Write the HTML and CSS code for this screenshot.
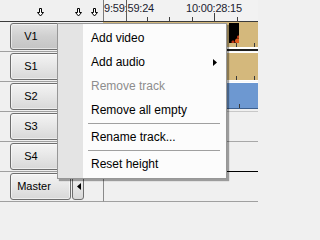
FILE: index.html
```html
<!DOCTYPE html>
<html>
<head>
<meta charset="utf-8">
<link rel="stylesheet" href="styles.css">
</head>
<body>
<div class="app">
  <div class="header">
    <div class="hdr-left">
      <svg class="arr" viewBox="0 0 7 9"><polygon points="2.5,0.5 4.5,0.5 4.5,4.5 6.5,4.5 3.5,8 0.5,4.5 2.5,4.5" fill="#fff" stroke="#000" stroke-width="1"/></svg>
      <svg class="arr a2" viewBox="0 0 7 9"><polygon points="2.5,0.5 4.5,0.5 4.5,4.5 6.5,4.5 3.5,8 0.5,4.5 2.5,4.5" fill="#fff" stroke="#000" stroke-width="1"/></svg>
      <svg class="arr a3" viewBox="0 0 7 9"><polygon points="2.5,0.5 4.5,0.5 4.5,4.5 6.5,4.5 3.5,8 0.5,4.5 2.5,4.5" fill="#fff" stroke="#000" stroke-width="1"/></svg>
    </div>
    <div class="ruler">
      <span class="tick" style="left:43px"></span>
      <span class="tick" style="left:65px"></span>
      <span class="tick" style="left:88px"></span>
      <span class="tick major" style="left:110px"></span>
      <span class="tick" style="left:133px"></span>
      <span class="tc tc-first">9:59:59:24</span>
      <span class="tc tc-mid" style="left:110px">10:00:28:15</span>
      <span class="playline" style="left:22px"></span>
    </div>
  </div>

  <div class="tracks">
    <div class="row">
      <div class="head">
        <div class="btn sel"><span class="lbl">V1</span></div>
        <div class="mini"><svg class="spk" viewBox="0 0 4 7"><polygon points="4,0 4,7 0,3.5" fill="#000"/></svg></div>
      </div>
      <div class="tl tl-v1">
        <div class="clip tan h25">
          <div class="thumb" style="margin-left:126px"></div>
          <span class="ctick" style="left:133px"></span>
          <span class="ctick" style="left:151px"></span>
        </div>
        <div class="vgap"></div>
      </div>
    </div>
    <div class="row">
      <div class="head">
        <div class="btn"><span class="lbl">S1</span></div>
        <div class="mini"><svg class="spk" viewBox="0 0 4 7"><polygon points="4,0 4,7 0,3.5" fill="#000"/></svg></div>
      </div>
      <div class="tl tl-s1">
        <div class="clip tan h27">
          <span class="ctick" style="left:133px"></span>
          <span class="ctick" style="left:151px"></span>
        </div>
      </div>
    </div>
    <div class="row">
      <div class="head">
        <div class="btn"><span class="lbl">S2</span></div>
        <div class="mini"><svg class="spk" viewBox="0 0 4 7"><polygon points="4,0 4,7 0,3.5" fill="#000"/></svg></div>
      </div>
      <div class="tl tl-s2">
        <div class="clip blue h26">
          <span class="ctick" style="left:136px"></span>
        </div>
      </div>
    </div>
    <div class="row">
      <div class="head">
        <div class="btn"><span class="lbl">S3</span></div>
        <div class="mini"><svg class="spk" viewBox="0 0 4 7"><polygon points="4,0 4,7 0,3.5" fill="#000"/></svg></div>
      </div>
      <div class="tl tl-s3"></div>
    </div>
    <div class="row">
      <div class="head">
        <div class="btn"><span class="lbl">S4</span></div>
        <div class="mini"><svg class="spk" viewBox="0 0 4 7"><polygon points="4,0 4,7 0,3.5" fill="#000"/></svg></div>
      </div>
      <div class="tl tl-s4"></div>
    </div>
    <div class="row">
      <div class="head">
        <div class="btn"><span class="lbl lbl-master">Master</span>
          <svg class="expand" viewBox="0 0 8 4"><path d="M0 0h3v1h-2v2h-1z M5 0h3v3h-1v-2h-2z" fill="#000"/></svg>
        </div>
        <div class="mini"><svg class="spk" viewBox="0 0 4 7"><polygon points="4,0 4,7 0,3.5" fill="#000"/></svg></div>
      </div>
      <div class="tl tl-master"></div>
    </div>
  </div>

  <div class="menu">
    <div class="item">Add video</div>
    <div class="item">Add audio<svg class="sub" viewBox="0 0 4 7"><polygon points="0,0 4,3.5 0,7" fill="#000"/></svg></div>
    <div class="item dis">Remove track</div>
    <div class="item">Remove all empty</div>
    <div class="sep"></div>
    <div class="item">Rename track...</div>
    <div class="sep"></div>
    <div class="item">Reset height</div>
  </div>
</div>
</body>
</html>
```

FILE: styles.css
```css
html, body {
  margin: 0;
  padding: 0;
}
body {
  width: 258px;
  height: 202px;
  overflow: hidden;
  background: #f0f0f0;
  font-family: "Liberation Sans", Arial, sans-serif;
}
.app {
  position: relative;
  width: 258px;
  height: 202px;
  overflow: hidden;
}

/* header */
.header {
  display: flex;
  height: 22px;
  box-sizing: border-box;
  border-bottom: 1px solid #3c3c3c;
  background: #f0f0f0;
}
.hdr-left {
  width: 103px;
  box-sizing: border-box;
  display: flex;
  align-items: flex-start;
  padding: 8px 0 0 37px;
}
.arr {
  width: 7px;
  height: 9px;
  display: block;
  flex: none;
}
.a2 { margin-left: 31px; }
.a3 { margin-left: 9px; }
.ruler {
  flex: 1;
  position: relative;
  border-left: 1px solid #7a7a7a;
  overflow: hidden;
  background: #f2f2f2;
}
.tc {
  position: absolute;
  top: 2px;
  font-size: 11px;
  line-height: 13px;
  letter-spacing: -0.2px;
  color: #1c1c30;
  white-space: nowrap;
}
.tc-first {
  left: 0;
}
.tc-mid {
  transform: translateX(-50%);
}
.tick {
  position: absolute;
  bottom: 0;
  width: 1px;
  height: 4px;
  background: #404040;
}
.tick.major { height: 8px; }
.playline {
  position: absolute;
  top: 0;
  bottom: 0;
  width: 1px;
  background: #5a5a5a;
}

/* tracks */
.row {
  display: grid;
  grid-template-columns: 103px 155px;
  height: 30px;
}
.head {
  display: flex;
  align-items: flex-start;
  gap: 1px;
  padding: 1px 0 0 10px;
  box-sizing: border-box;
  border-bottom: 1px solid #a0a0a0;
}
.btn {
  width: 61px;
  height: 27px;
  box-sizing: border-box;
  border: 1px solid #6e6e6e;
  border-radius: 3px;
  background: linear-gradient(#f4f4f4, #e6e6e6 50%, #d8d8d8);
  box-shadow: inset 0 0 0 1px rgba(255, 255, 255, 0.55);
  display: flex;
  align-items: flex-start;
}
.btn.sel {
  background: linear-gradient(#e2e2e2, #cfcfcf 50%, #c4c4c4);
}
.lbl {
  width: 40px;
  text-align: center;
  font-size: 11px;
  line-height: 25px;
  color: #000;
}
.lbl-master {
  width: 46px;
}
.expand {
  width: 8px;
  height: 4px;
  display: block;
  margin: 1px 0 0 0;
}
.mini {
  width: 12px;
  height: 27px;
  box-sizing: border-box;
  border: 1px solid #6e6e6e;
  border-radius: 3px;
  background: linear-gradient(#f4f4f4, #e6e6e6 50%, #d8d8d8);
  display: flex;
  align-items: center;
  justify-content: flex-end;
  padding-right: 2px;
}
.spk {
  width: 4px;
  height: 7px;
  display: block;
}

.tl {
  box-sizing: border-box;
  border-bottom: 1px solid #c8c8c8;
  background: #f0f0f0;
  display: flex;
  flex-direction: column;
}
.clip {
  position: relative;
  display: flex;
  align-items: flex-start;
  flex: none;
}
.tan { background: #d4b87c; }
.blue {
  background: #6d98d1;
  border-bottom: 1px solid #3c5f8e;
  box-sizing: border-box;
}
.h25 { height: 25px; }
.h26 { height: 26px; }
.h27 { height: 27px; }
.ctick {
  position: absolute;
  bottom: 0;
  width: 1px;
  height: 4px;
  background: #3a3a3a;
}
.thumb {
  width: 10px;
  height: 20px;
  margin-top: 1px;
  background:
    radial-gradient(circle at 85% 90%, #e05a1c 0 2px, transparent 3px),
    radial-gradient(circle at 40% 95%, #b83414 0 1px, transparent 2px),
    radial-gradient(circle at 95% 70%, #c0401a 0 1px, transparent 2px),
    #000;
}
.tl-v1 {
  background: #fff;
  border-bottom-color: #f6f6f6;
}
.vgap {
  flex: 1;
  border-bottom: 2px solid #1e1e1e;
}
.tl-s1 {
  background: #fff;
  padding-top: 1px;
  border-bottom-color: #f8f8f8;
}
.tl-s2 {
  padding-top: 1px;
  box-shadow: inset 0 1px #fff;
  border-bottom-color: #c8c8c8;
}
.tl-s3 { border-bottom-color: #a8a8a8; }
.tl-s4 { border-bottom-color: #000; }
.tl-master {
  border-bottom-color: #a0a0a0;
  border-left: 1px solid #8a8a8a;
}

/* context menu */
.menu {
  position: absolute;
  left: 57px;
  top: 23px;
  width: 170px;
  box-sizing: border-box;
  border: 1px solid #979797;
  padding: 2px 0;
  background: linear-gradient(to right, #e4e4e4 25px, #fcfcfc 25px);
  box-shadow: 2px 2px 1px rgba(0, 0, 0, 0.35);
  font-size: 12px;
  color: #000;
}
.item {
  height: 24px;
  line-height: 24px;
  padding: 0 9px 0 33px;
  display: flex;
  align-items: center;
  justify-content: space-between;
  white-space: nowrap;
}
.item.dis { color: #8d8d8d; }
.sub {
  width: 4px;
  height: 7px;
  display: block;
}
.sep {
  height: 3px;
  display: flex;
  align-items: center;
  padding: 0 6px 0 30px;
}
.sep::before {
  content: "";
  flex: 1;
  height: 1px;
  background: #a0a0a0;
}
```
